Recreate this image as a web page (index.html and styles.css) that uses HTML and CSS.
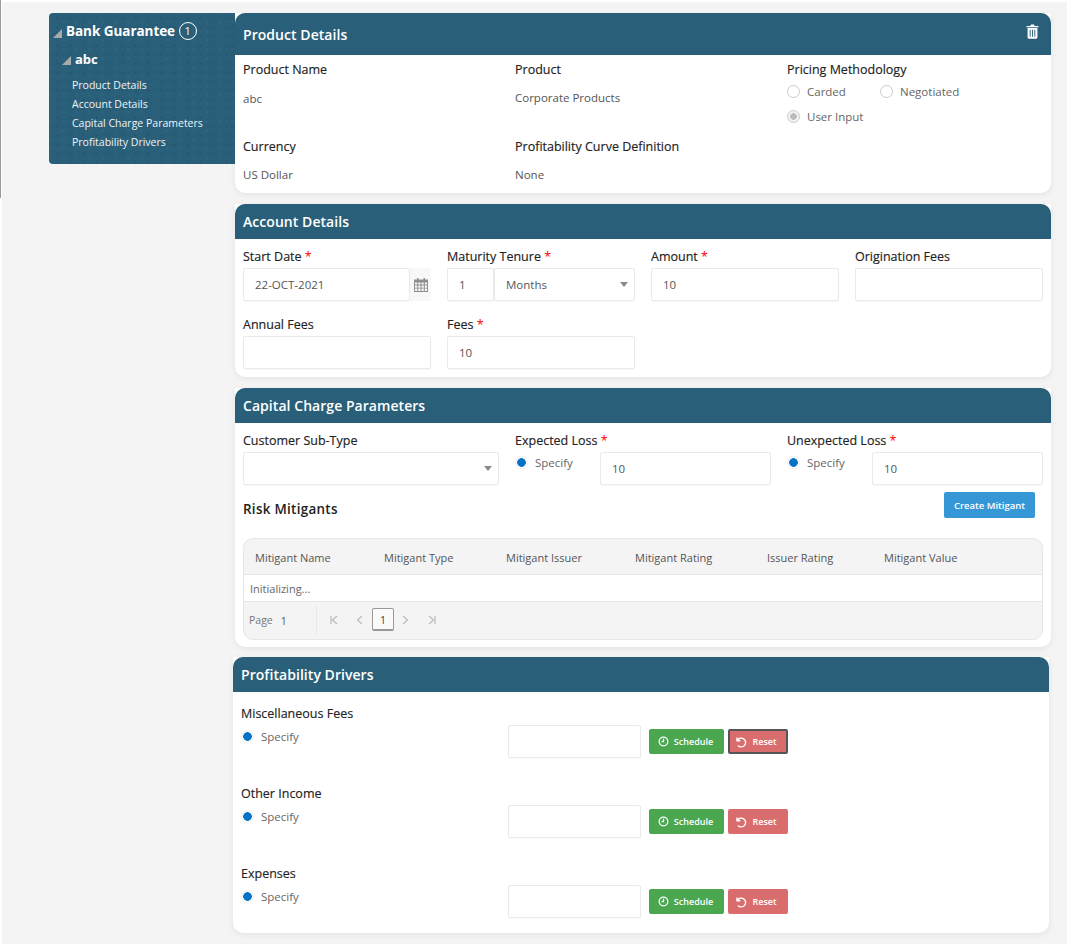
FILE: index.html
```html
<!DOCTYPE html>
<html lang="en">
<head>
    <meta charset="UTF-8">
    <meta name="viewport" content="width=device-width, initial-scale=1.0">
    <title>Bank Guarantee</title>
    <link rel="stylesheet" href="styles.css">
</head>
<body>
    <div class="page">
        <!-- Left navigation -->
        <nav class="side-nav">
            <div class="nav-title"><span class="tri"></span>Bank Guarantee <span class="count">1</span></div>
            <div class="nav-sub"><span class="tri"></span>abc</div>
            <ul class="nav-links">
                <li>Product Details</li>
                <li>Account Details</li>
                <li>Capital Charge Parameters</li>
                <li>Profitability Drivers</li>
            </ul>
        </nav>

        <main class="content">
            <!-- Product Details -->
            <section class="card card-product">
                <header class="card-head tall">
                    <h2>Product Details</h2>
                    <svg class="trash" viewBox="0 0 14 16"><path fill="#fff" fill-rule="evenodd" d="M4.6 2 5.4.4h3.2L9.4 2H13.4v1.5H.6V2zM1.7 4.3h10.6v9.9c0 1-.7 1.6-1.6 1.6H3.3c-.9 0-1.6-.6-1.6-1.6zM4 6v7.6h1V6zM6.5 6v7.6h1V6zM9 6v7.6h1V6z"/></svg>
                </header>
                <div class="product-grid">
                    <div class="info">
                        <label>Product Name</label>
                        <p class="value first">abc</p>
                    </div>
                    <div class="info">
                        <label>Product</label>
                        <p class="value">Corporate Products</p>
                    </div>
                    <div class="info">
                        <label>Pricing Methodology</label>
                        <div class="radio-group">
                            <span class="radio-item"><i class="radio"></i>Carded</span>
                            <span class="radio-item"><i class="radio"></i>Negotiated</span>
                            <span class="radio-item"><i class="radio grey"></i>User Input</span>
                        </div>
                    </div>
                    <div class="info">
                        <label>Currency</label>
                        <p class="value">US Dollar</p>
                    </div>
                    <div class="info">
                        <label>Profitability Curve Definition</label>
                        <p class="value">None</p>
                    </div>
                </div>
            </section>

            <!-- Account Details -->
            <section class="card card-account">
                <header class="card-head"><h2>Account Details</h2></header>
                <div class="account-grid">
                    <div class="field">
                        <label>Start Date <em>*</em></label>
                        <div class="date-row">
                            <div class="input">22-OCT-2021</div>
                            <span class="cal-btn">
                                <svg viewBox="0 0 14 14"><path fill="#8f8f8f" fill-rule="evenodd" d="M3 0h1.5v1.5h5V0H11v1.5h3V14H0V1.5h3zM1 4.5v2h2.2v-2zm3.2 0v2h2.3v-2zm3.3 0v2h2.3v-2zm3.3 0v2H13v-2zM1 7.400v2.300h2.200V7.400zm3.200 0v2.300h2.300V7.400zm3.300 0v2.300h2.300V7.400zm3.300 0v2.300H13V7.400zM1 10.600V13h2.200v-2.400zm3.200 0V13h2.300v-2.400zm3.300 0V13h2.300v-2.400zm3.300 0V13H13v-2.400z"/></svg>
                            </span>
                        </div>
                    </div>
                    <div class="field">
                        <label>Maturity Tenure <em>*</em></label>
                        <div class="tenure-row">
                            <div class="input tenure-num">1</div>
                            <div class="input select">Months<i class="caret"></i></div>
                        </div>
                    </div>
                    <div class="field">
                        <label>Amount <em>*</em></label>
                        <div class="input">10</div>
                    </div>
                    <div class="field">
                        <label>Origination Fees</label>
                        <div class="input"></div>
                    </div>
                    <div class="field">
                        <label>Annual Fees</label>
                        <div class="input"></div>
                    </div>
                    <div class="field">
                        <label>Fees <em>*</em></label>
                        <div class="input">10</div>
                    </div>
                </div>
            </section>

            <!-- Capital Charge Parameters -->
            <section class="card card-capital">
                <header class="card-head"><h2>Capital Charge Parameters</h2></header>
                <div class="capital-grid">
                    <div class="field">
                        <label>Customer Sub-Type</label>
                        <div class="input select"><i class="caret"></i></div>
                    </div>
                    <div class="field">
                        <label>Expected Loss <em>*</em></label>
                        <div class="specify-row">
                            <span class="radio-item"><i class="radio on"></i>Specify</span>
                            <div class="input">10</div>
                        </div>
                    </div>
                    <div class="field">
                        <label>Unexpected Loss <em>*</em></label>
                        <div class="specify-row">
                            <span class="radio-item"><i class="radio on"></i>Specify</span>
                            <div class="input">10</div>
                        </div>
                    </div>
                </div>
                <div class="mitigant-bar">
                    <h3>Risk Mitigants</h3>
                    <button class="btn-blue">Create Mitigant</button>
                </div>
                <div class="table-box">
                    <div class="table-head">
                        <span class="col-name">Mitigant Name</span>
                        <span class="col-type">Mitigant Type</span>
                        <span class="col-issuer">Mitigant Issuer</span>
                        <span class="col-rating">Mitigant Rating</span>
                        <span class="col-irating">Issuer Rating</span>
                        <span>Mitigant Value</span>
                    </div>
                    <div class="table-row">Initializing...</div>
                    <div class="table-pager">
                        <span class="page-label">Page <b>1</b></span>
                        <div class="pager-btns">
                            <svg viewBox="0 0 10 10"><path d="M2 1v8M8 1 3.500 5 8 9" /></svg>
                            <svg viewBox="0 0 10 10"><path d="M7 1 2.500 5 7 9" /></svg>
                            <span class="page-num">1</span>
                            <svg viewBox="0 0 10 10"><path d="M3 1l4.500 4L3 9" /></svg>
                            <svg viewBox="0 0 10 10"><path d="M2 1l4.500 4L2 9M8 1v8" /></svg>
                        </div>
                    </div>
                </div>
            </section>

            <!-- Profitability Drivers -->
            <section class="card card-drivers">
                <header class="card-head"><h2>Profitability Drivers</h2></header>
                <div class="driver">
                    <div class="driver-left">
                        <label>Miscellaneous Fees</label>
                        <span class="radio-item"><i class="radio on"></i>Specify</span>
                    </div>
                    <div class="input"></div>
                    <button class="btn-green"><svg viewBox="0 0 12 12"><circle cx="6" cy="6" r="4.700"/><path d="M6 3v3.200H3.800"/></svg>Schedule</button>
                    <button class="btn-red focus"><svg viewBox="0 0 12 12"><path d="M2 1.500v3.300h3.300M2.300 4.500A4.400 4.400 0 1 1 3 9.500"/></svg>Reset</button>
                </div>
                <div class="driver">
                    <div class="driver-left">
                        <label>Other Income</label>
                        <span class="radio-item"><i class="radio on"></i>Specify</span>
                    </div>
                    <div class="input"></div>
                    <button class="btn-green"><svg viewBox="0 0 12 12"><circle cx="6" cy="6" r="4.700"/><path d="M6 3v3.200H3.800"/></svg>Schedule</button>
                    <button class="btn-red"><svg viewBox="0 0 12 12"><path d="M2 1.500v3.300h3.300M2.300 4.500A4.400 4.400 0 1 1 3 9.500"/></svg>Reset</button>
                </div>
                <div class="driver">
                    <div class="driver-left">
                        <label>Expenses</label>
                        <span class="radio-item"><i class="radio on"></i>Specify</span>
                    </div>
                    <div class="input"></div>
                    <button class="btn-green"><svg viewBox="0 0 12 12"><circle cx="6" cy="6" r="4.700"/><path d="M6 3v3.200H3.800"/></svg>Schedule</button>
                    <button class="btn-red"><svg viewBox="0 0 12 12"><path d="M2 1.500v3.300h3.300M2.300 4.500A4.400 4.400 0 1 1 3 9.500"/></svg>Reset</button>
                </div>
            </section>
        </main>
    </div>
</body>
</html>
```

FILE: styles.css
```css
* {
    margin: 0;
    padding: 0;
    box-sizing: border-box;
}

html, body {
    height: 100%;
}

body {
    font-family: "Open Sans", "Noto Sans", sans-serif;
    background-color: #fff;
    color: #222;
    overflow: hidden;
}

.page {
    position: relative;
    display: flex;
    align-items: flex-start;
    height: 942px;
    margin: 2px 0 0 2px;
    padding: 11px 0 0 47px;
    background-color: #f4f4f4;
}

/* thin grey line on the left edge, stops part way down */
.page::before {
    content: "";
    position: absolute;
    left: -2px;
    top: -2px;
    width: 1px;
    height: 198px;
    background: #9a9a9a;
}

/* side nav */
.side-nav {
    width: 186px;
    height: 151px;
    flex-shrink: 0;
    padding-top: 7px;
    color: #fff;
    border-radius: 4px 0 0 4px;
    background-color: #2a5f79;
    background-image:
        radial-gradient(circle, #245369 0.8px, transparent 1.2px),
        radial-gradient(circle, #2c6480 1.6px, transparent 2px);
    background-size: 13px 9px, 13px 9px;
    background-position: 2px 1px, 8px 5px;
}

.tri {
    width: 0;
    height: 0;
    display: inline-block;
    border-style: solid;
    border-width: 0 0 9px 9px;
    border-color: transparent transparent #a9a9a9 transparent;
}

.nav-title {
    display: flex;
    align-items: center;
    height: 21px;
    padding-left: 4px;
    font-size: 13.500px;
    font-weight: 700;
    letter-spacing: -0.05px;
    white-space: pre;
}

.nav-title .tri {
    margin: 5px 4px 0 0;
}

.count {
    width: 18px;
    height: 18px;
    border: 1px solid #fff;
    border-radius: 50%;
    font-size: 11px;
    font-weight: 400;
    line-height: 16px;
    text-align: center;
}

.nav-sub {
    display: flex;
    align-items: center;
    height: 21px;
    margin-top: 7px;
    padding-left: 13px;
    font-size: 13px;
    font-weight: 700;
}

.nav-sub .tri {
    margin: 3px 4px 0 0;
}

.nav-links {
    list-style: none;
    margin-top: 7px;
    padding-left: 23px;
    font-size: 10.500px;
    line-height: 19px;
    color: #eef3f6;
}

/* cards */
.content {
    width: 816px;
    flex-shrink: 0;
}

.card {
    background: #fff;
    border-radius: 0 0 10px 10px;
    box-shadow: 0 2px 6px rgba(0, 0, 0, 0.07);
    margin-bottom: 11px;
}

.card-head {
    display: flex;
    justify-content: space-between;
    align-items: center;
    height: 35px;
    padding: 0 8px;
    background-color: #2a5f79;
    border-radius: 10px 10px 0 0;
    color: #fff;
}

.card-head.tall {
    height: 42px;
    align-items: flex-start;
    padding-top: 12px;
}

.card-head h2 {
    font-size: 14px;
    font-weight: 600;
    line-height: 19px;
    letter-spacing: 0.05px;
}

.trash {
    width: 13px;
    height: 15px;
    margin: -1px 4px 0 0;
}

label {
    display: block;
    font-size: 12.500px;
    font-weight: 500;
    -webkit-text-stroke: 0.15px #222;
    line-height: 17px;
    color: #222;
    white-space: nowrap;
}

label em {
    color: #f00;
    font-style: normal;
    font-weight: 400;
    -webkit-text-stroke: 0;
}

.card-product {
    height: 180px;
}

.product-grid {
    display: grid;
    grid-template-columns: 272px 272px 272px;
    grid-template-rows: 77px 60px;
    padding: 6px 8px 0;
}

.value {
    margin-top: 12px;
    font-size: 11.500px;
    line-height: 16px;
    color: #555;
}

.value.first {
    margin-top: 13px;
}

.radio-group {
    display: grid;
    grid-template-columns: 93px 100px;
    grid-auto-rows: 25px;
    margin-top: 3px;
}

.radio-item {
    display: flex;
    align-items: center;
    height: 20px;
    font-size: 11.500px;
    color: #666;
}

.radio {
    width: 13px;
    height: 13px;
    margin-right: 7px;
    border: 1px solid #ccc;
    border-radius: 50%;
    background: #fff;
    flex-shrink: 0;
}

.radio.grey {
    background: radial-gradient(circle, #bbb 0 3px, #f1f1f1 3.500px);
}

.radio.on {
    border-color: #eee;
    background: radial-gradient(circle, #0572c6 0 4px, #fff 4.600px);
}

.card-account {
    height: 173px;
}

.account-grid {
    display: grid;
    grid-template-columns: repeat(4, 188px);
    grid-auto-rows: 68px;
    column-gap: 16px;
    padding: 9px 8px 0;
}

.field label {
    margin-bottom: 3px;
}

.input {
    height: 33px;
    padding: 0 11px;
    border: 1px solid #eaeaea;
    border-radius: 2px;
    font-size: 11.500px;
    line-height: 32px;
    color: #555;
    background: #fff;
    box-shadow: 0 1px 1px rgba(0, 0, 0, 0.03);
}

.date-row {
    display: flex;
}

.date-row .input {
    width: 167px;
}

.cal-btn {
    width: 21px;
    height: 33px;
    display: flex;
    align-items: center;
    justify-content: center;
    background: #f8f8f8;
}

.cal-btn svg {
    width: 14px;
    height: 14px;
}

.tenure-row {
    display: flex;
}

.tenure-num {
    width: 47px;
    flex-shrink: 0;
    padding-left: 11px;
}

.select {
    position: relative;
    flex: 1;
}

.caret {
    position: absolute;
    right: 6px;
    top: 13px;
    border-style: solid;
    border-width: 5px 4px 0;
    border-color: #888 transparent transparent;
}

.card-capital {
    height: 259px;
}

.capital-grid {
    display: grid;
    grid-template-columns: repeat(3, 256px);
    column-gap: 16px;
    padding: 9px 8px 0;
}

.specify-row {
    display: flex;
    justify-content: space-between;
}

.specify-row .input {
    width: 171px;
}

.mitigant-bar {
    display: flex;
    justify-content: space-between;
    align-items: flex-start;
    height: 53px;
    padding: 7px 16px 0 8px;
}

.mitigant-bar h3 {
    padding-top: 8px;
    font-size: 13.400px;
    font-weight: 600;
    line-height: 19px;
    letter-spacing: 0.3px;
}

.btn-blue {
    width: 91px;
    height: 26px;
    border: none;
    border-radius: 2px;
    background-color: #3597d6;
    color: #fff;
    font-family: inherit;
    font-size: 9.500px;
    font-weight: 600;
}

.table-box {
    margin: 0 8px;
    height: 102px;
    border: 1px solid #e6e6e6;
    border-radius: 10px;
    background: #f4f4f4;
    overflow: hidden;
    font-size: 11px;
    color: #555;
}

.table-head {
    display: flex;
    align-items: center;
    height: 36px;
    padding: 1px 0 0 11px;
    border-bottom: 1px solid #e6e6e6;
}

.col-name { width: 129px; }
.col-type { width: 122px; }
.col-issuer { width: 129px; }
.col-rating { width: 132px; }
.col-irating { width: 117px; }

.table-row {
    height: 27px;
    padding-left: 6px;
    line-height: 27px;
    background: #fff;
    border-bottom: 1px solid #e6e6e6;
    color: #666;
}

.table-pager {
    display: flex;
    align-items: center;
    height: 37px;
}

.page-label {
    display: flex;
    align-items: center;
    width: 73px;
    height: 28px;
    margin-top: -2px;
    padding-left: 5px;
    border-right: 1px solid #e8e8e8;
    font-size: 10.500px;
    color: #777;
}

.page-label b {
    margin: 2px 0 0 8px;
    font-weight: 400;
    color: #555;
}

.pager-btns {
    display: flex;
    align-items: center;
    margin: -2px 0 0 4px;
}

.pager-btns svg {
    width: 10px;
    height: 10px;
    fill: none;
    stroke: #bbb;
    stroke-width: 1.200;
    margin: 0 8px;
}

.pager-btns .page-num + svg {
    margin-left: 6px;
}

.pager-btns svg:last-child {
    margin-left: 9px;
}

.page-num {
    width: 22px;
    height: 23px;
    margin-left: -1px;
    border: 1px solid #999;
    border-bottom-width: 2px;
    border-radius: 2px;
    background: #fafafa;
    text-align: center;
    line-height: 23px;
    font-size: 10.500px;
    color: #444;
}

.card-drivers {
    width: 816px;
    height: 276px;
    margin: -1px 0 0 -2px;
}

/* each driver row is 80px tall, label on the left then input and buttons */
.driver {
    display: flex;
    align-items: flex-start;
    height: 60px;
    margin-top: 20px;
    padding: 0 8px;
}

.driver-left {
    width: 267px;
    flex-shrink: 0;
}

.driver-left label {
    margin-top: -7px;
    margin-bottom: 4px;
}

.driver .input {
    width: 133px;
    height: 33px;
    margin: 13px 8px 0 0;
}

.btn-green, .btn-red {
    display: flex;
    align-items: center;
    justify-content: center;
    height: 25px;
    margin-top: 17px;
    border: none;
    border-radius: 2px;
    color: #fff;
    font-family: inherit;
    font-size: 9px;
    font-weight: 600;
}

.btn-green svg, .btn-red svg {
    width: 11px;
    height: 11px;
    margin-right: 5px;
    fill: none;
    stroke: #fff;
    stroke-width: 1.400;
}

.btn-green {
    width: 75px;
    margin-right: 4px;
    padding-right: 2px;
    background-color: #4aa64f;
}

.btn-red {
    width: 60px;
    padding-right: 4px;
    background-color: #d96c6c;
}

.btn-red svg {
    width: 12px;
    height: 12px;
}

.btn-red.focus {
    border: 2px solid #555;
}
```
